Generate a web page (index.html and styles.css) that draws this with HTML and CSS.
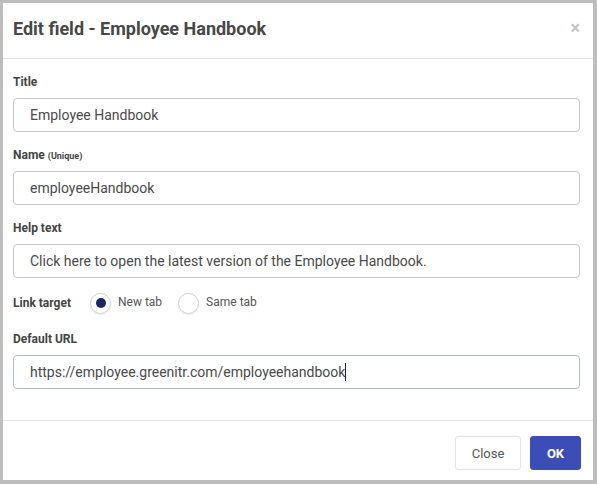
FILE: index.html
```html
<!DOCTYPE html>
<html lang="en">
<head>
<meta charset="utf-8">
<title>Edit field - Employee Handbook</title>
<link rel="stylesheet" href="styles.css">
</head>
<body>
<div class="modal">
  <div class="modal-header">
    <h1 class="modal-title">Edit field - Employee Handbook</h1>
    <span class="close-x">&times;</span>
  </div>
  <div class="modal-body">
    <div class="group">
      <div class="label">Title</div>
      <div class="field">Employee Handbook</div>
    </div>
    <div class="group">
      <div class="label">Name <small class="hint">(Unique)</small></div>
      <div class="field">employeeHandbook</div>
    </div>
    <div class="group">
      <div class="label">Help text</div>
      <div class="field">Click here to open the latest version of the Employee Handbook.</div>
    </div>
    <div class="radio-row">
      <div class="label inline">Link target</div>
      <div class="radio-opt"><span class="radio checked"></span><span class="radio-text">New tab</span></div>
      <div class="radio-opt"><span class="radio"></span><span class="radio-text">Same tab</span></div>
    </div>
    <div class="group last">
      <div class="label">Default URL</div>
      <div class="field focused">https://employee.greenitr.com/employeehandbook<span class="caret"></span></div>
    </div>
  </div>
  <div class="modal-footer">
    <button class="btn btn-default">Close</button>
    <button class="btn btn-primary">OK</button>
  </div>
</div>
</body>
</html>
```
FILE: styles.css
```css
html, body {
  margin: 0;
  padding: 0;
}
body {
  background: #bdbdbd;
  font-family: Roboto, "Liberation Sans", Arial, sans-serif;
  width: 597px;
  height: 484px;
  padding: 3px 4px 4px 3px;
  box-sizing: border-box;
}
.modal {
  background: #fff;
  height: 477px;
  display: flex;
  flex-direction: column;
}
.modal-header {
  flex-shrink: 0;
  height: 55px;
  border-bottom: 1px solid #e4e4e4;
  display: flex;
  align-items: center;
  justify-content: space-between;
  padding: 0 13px 0 10px;
  box-sizing: content-box;
}
.modal-title {
  margin: 0;
  font-size: 18px;
  font-weight: 700;
  color: #484848;
  line-height: 24px;
  padding-bottom: 3px;
}
.close-x {
  color: #c4c4c4;
  font-size: 18px;
  font-weight: 700;
  line-height: 1;
  margin-right: 0;
  padding-bottom: 6px;
}
.modal-body {
  padding: 15px 13px 0 10px;
  flex: 1 1 auto;
  min-height: 0;
}
.group {
  margin-bottom: 15px;
}
.group.last {
  margin-bottom: 0;
}
.label {
  font-size: 12px;
  font-weight: 700;
  color: #444;
  line-height: 16px;
  margin-bottom: 8px;
}
.hint {
  font-size: 9px;
  font-weight: 700;
  line-height: 0;
}
.field {
  height: 34px;
  box-sizing: border-box;
  border: 1px solid #c6c6c6;
  border-radius: 4px;
  padding: 0 16px;
  font-size: 14px;
  color: #4a4a4a;
  line-height: 32px;
  white-space: nowrap;
}
.field.focused {
  border-color: #b0bcc4;
}
.caret {
  display: inline-block;
  width: 1px;
  height: 18px;
  background: #222;
  vertical-align: -4px;
}
.radio-row {
  display: flex;
  align-items: center;
  height: 24px;
  margin-top: -2px;
  margin-bottom: 16px;
}
.label.inline {
  margin: 0 18px 0 0;
  width: 59px;
}
.radio-opt {
  display: flex;
  align-items: center;
  margin-right: 16px;
}
.radio {
  width: 21px;
  height: 21px;
  box-sizing: border-box;
  border: 1px solid #d0d0d0;
  border-radius: 50%;
  box-shadow: 0 1px 2px rgba(0,0,0,0.08);
  display: flex;
  align-items: center;
  justify-content: center;
  margin-right: 7px;
}
.radio.checked::after {
  content: "";
  width: 10px;
  height: 10px;
  border-radius: 50%;
  background: #1f2462;
}
.radio-text {
  font-size: 12px;
  color: #555;
  padding-bottom: 2px;
}
.modal-footer {
  flex-shrink: 0;
  border-top: 1px solid #e4e4e4;
  display: flex;
  justify-content: flex-end;
  gap: 9px;
  padding: 15px 12px 10px 10px;
}
.btn {
  font-family: inherit;
  font-size: 13px;
  height: 34px;
  border-radius: 3px;
  cursor: pointer;
}
.btn-default {
  background: #fff;
  border: 1px solid #e2e2e2;
  color: #555;
  width: 66px;
}
.btn-primary {
  background: #3d4db7;
  border: 1px solid #3d4db7;
  color: #fff;
  font-weight: 700;
  width: 51px;
}
```
